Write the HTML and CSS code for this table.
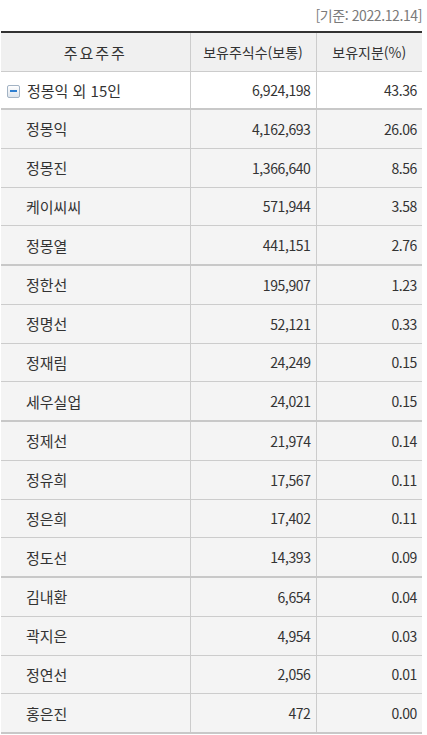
FILE: index.html
```html
<!DOCTYPE html>
<html lang="ko">
<head>
<meta charset="utf-8">
<link rel="stylesheet" href="styles.css">
</head>
<body>
<div class="wrap">
  <p class="basis">[기준: 2022.12.14]</p>
  <table class="holders">
    <colgroup>
      <col class="c-name">
      <col class="c-shares">
      <col class="c-ratio">
    </colgroup>
    <thead>
      <tr>
        <th class="h-name">주요주주</th>
        <th>보유주식수(보통)</th>
        <th>보유지분(%)</th>
      </tr>
    </thead>
    <tbody>
      <tr class="sum">
        <td class="name"><span class="toggle" aria-hidden="true"></span>정몽익 외 15인</td>
        <td class="num">6,924,198</td>
        <td class="num">43.36</td>
      </tr>
      <tr class="sub"><td class="name">정몽익</td><td class="num">4,162,693</td><td class="num">26.06</td></tr>
      <tr class="sub"><td class="name">정몽진</td><td class="num">1,366,640</td><td class="num">8.56</td></tr>
      <tr class="sub"><td class="name">케이씨씨</td><td class="num">571,944</td><td class="num">3.58</td></tr>
      <tr class="sub end"><td class="name">정몽열</td><td class="num">441,151</td><td class="num">2.76</td></tr>
      <tr class="sub"><td class="name">정한선</td><td class="num">195,907</td><td class="num">1.23</td></tr>
      <tr class="sub"><td class="name">정명선</td><td class="num">52,121</td><td class="num">0.33</td></tr>
      <tr class="sub"><td class="name">정재림</td><td class="num">24,249</td><td class="num">0.15</td></tr>
      <tr class="sub end"><td class="name">세우실업</td><td class="num">24,021</td><td class="num">0.15</td></tr>
      <tr class="sub"><td class="name">정제선</td><td class="num">21,974</td><td class="num">0.14</td></tr>
      <tr class="sub"><td class="name">정유희</td><td class="num">17,567</td><td class="num">0.11</td></tr>
      <tr class="sub"><td class="name">정은희</td><td class="num">17,402</td><td class="num">0.11</td></tr>
      <tr class="sub end"><td class="name">정도선</td><td class="num">14,393</td><td class="num">0.09</td></tr>
      <tr class="sub"><td class="name">김내환</td><td class="num">6,654</td><td class="num">0.04</td></tr>
      <tr class="sub"><td class="name">곽지은</td><td class="num">4,954</td><td class="num">0.03</td></tr>
      <tr class="sub"><td class="name">정연선</td><td class="num">2,056</td><td class="num">0.01</td></tr>
      <tr class="sub end"><td class="name">홍은진</td><td class="num">472</td><td class="num">0.00</td></tr>
    </tbody>
  </table>
</div>
</body>
</html>
```

FILE: styles.css
```css
html, body {
  margin: 0;
  padding: 0;
  background: #ffffff;
}

body {
  font-family: "Noto Sans CJK KR", "Noto Sans", sans-serif;
  color: #333333;
}

.wrap {
  padding: 0 5px 0 1px;
}

.basis {
  margin: 0;
  height: 31px;
  box-sizing: border-box;
  padding-top: 6px;
  text-align: right;
  font-size: 14px;
  line-height: 18px;
  color: #7a7a7a;
  letter-spacing: -0.4px;
}

.holders {
  width: 100%;
  border-collapse: collapse;
  table-layout: fixed;
  border-top: 2px solid #333333;
  font-size: 15px;
}

.c-name { width: 189px; }
.c-shares { width: 126px; }
.c-ratio { width: auto; }

.holders th {
  height: 38px;
  padding: 0;
  background: #f0f0f0;
  font-weight: normal;
  font-size: 14px;
  color: #333333;
  text-align: center;
  border-bottom: 1px solid #cccccc;
  border-left: 1px solid #cccccc;
}

.holders th.h-name {
  letter-spacing: 2px;
  font-size: 15px;
}

.holders th:first-child,
.holders td:first-child {
  border-left: 0;
}

.holders td {
  height: 37.75px;
  padding: 0;
  border-left: 1px solid #cccccc;
  border-bottom: 1px solid #cccccc;
  vertical-align: middle;
}

.holders .sum td {
  background: #ffffff;
  height: 36px;
  border-bottom: 2px solid #c8c8c8;
}

.holders .sub td {
  background: #f4f4f4;
}

.holders .sub.end td {
  border-bottom: 2px solid #c8c8c8;
}

.name {
  padding-left: 25px !important;
}

.sum .name {
  padding-left: 6px !important;
}

.num {
  text-align: right;
  padding-right: 5px !important;
  font-size: 14px;
  letter-spacing: -0.4px;
}

.toggle {
  display: inline-block;
  width: 11px;
  height: 11px;
  margin-right: 7px;
  vertical-align: -1px;
  border: 1px solid #a3b3c4;
  border-radius: 2px;
  background: linear-gradient(#ffffff, #dde4ec);
  position: relative;
}

.toggle::after {
  content: "";
  position: absolute;
  left: 2px;
  right: 2px;
  top: 4px;
  height: 2px;
  background: #2f7fd0;
}
```
